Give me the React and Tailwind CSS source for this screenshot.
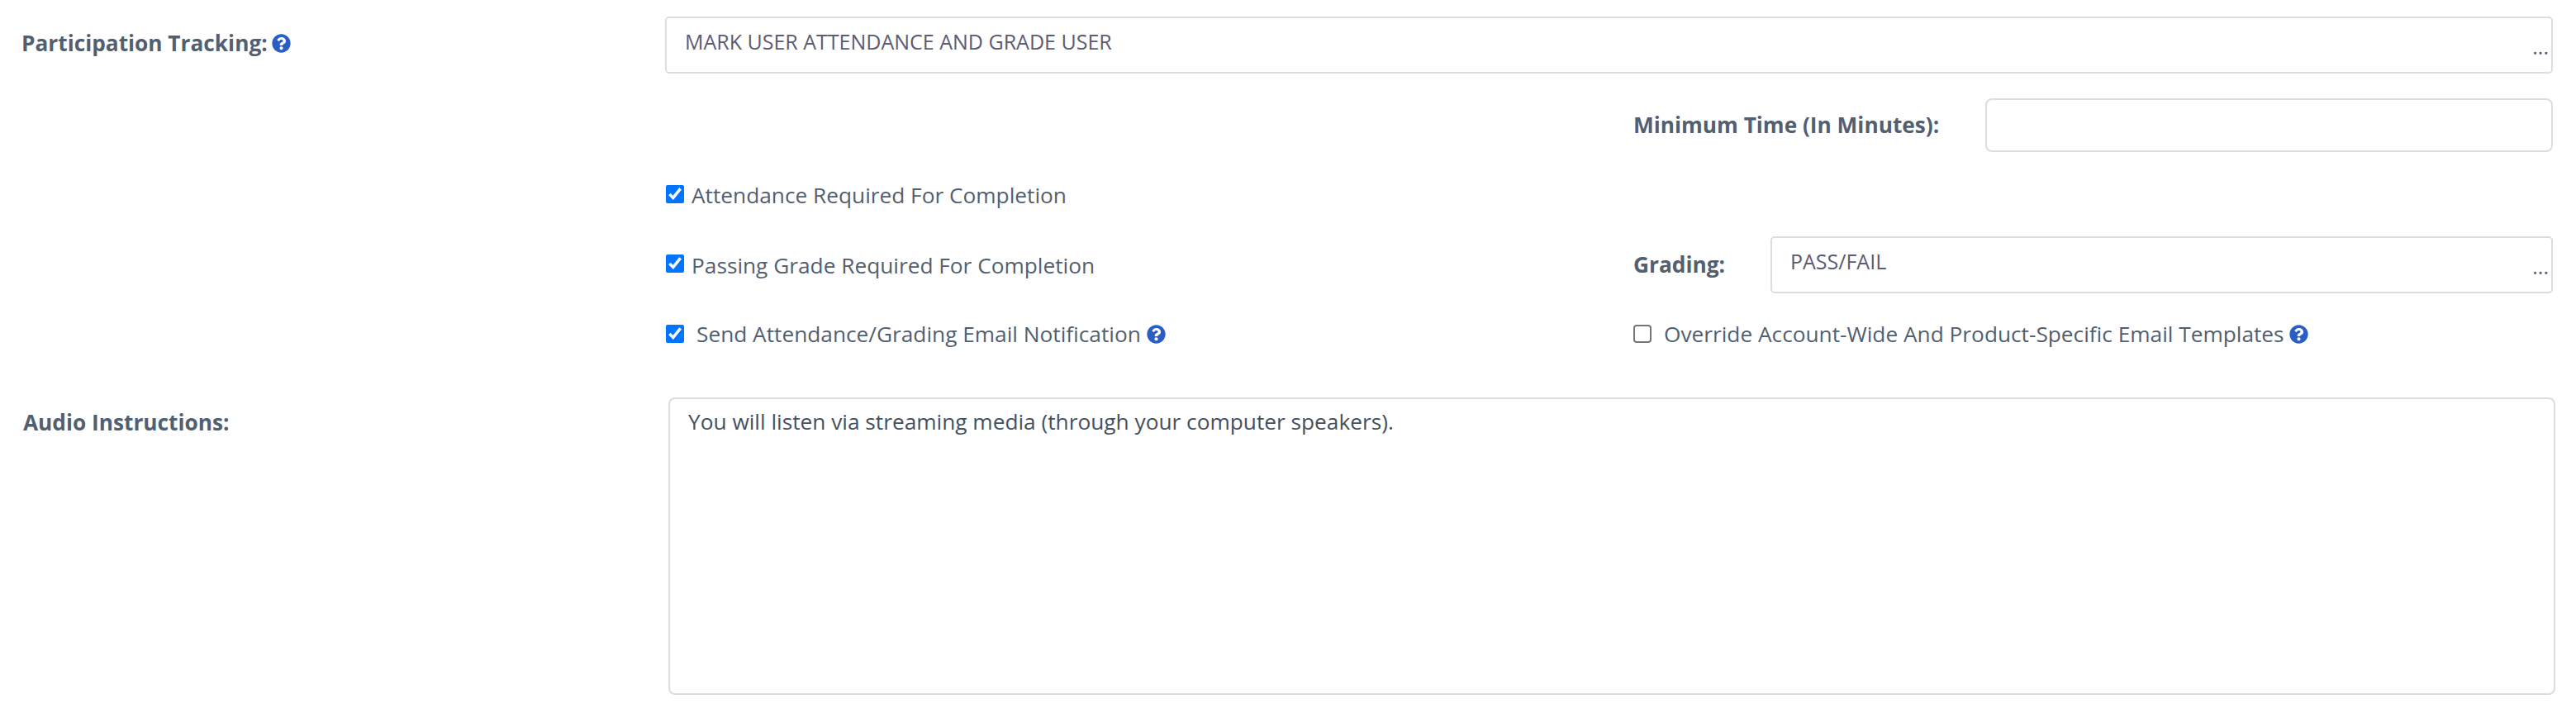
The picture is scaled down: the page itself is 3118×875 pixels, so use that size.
import { FaQuestionCircle } from "react-icons/fa";

function Help() {
  return <FaQuestionCircle className="text-[#2a5ec2] w-[23px] h-[23px] shrink-0" />;
}

function Label({ children, className = "" }) {
  return <span className={`font-bold text-[26.25px] leading-[30px] text-[#525f70] whitespace-nowrap ${className}`}>{children}</span>;
}

function SelectBox({ value, className = "" }) {
  return (
    <div className={`h-[69px] border-2 border-[#dddddd] rounded-[5px] bg-white flex pl-[22px] pr-[3px] text-[25px] text-[#5b5b72] ${className}`}>
      <span className="flex-1 pt-[14px] leading-[28px]">{value}</span>
      <span className="self-end pb-[17px] leading-[28px]">...</span>
    </div>
  );
}

function Check({ checked, label, gap = "ml-[9px]", boxClass = "" }) {
  return (
    <label className="flex items-center text-[26.25px] leading-[30px] text-[#525f70] whitespace-nowrap">
      <input type="checkbox" defaultChecked={checked} className={`w-[22px] h-[22px] m-0 shrink-0 ${boxClass}`} />
      <span className={gap}>{label}</span>
    </label>
  );
}

export default function App() {
  return (
    <div className="w-[3118px] h-[875px] bg-white pt-[20px] font-['Open_Sans',sans-serif] overflow-hidden">
      {/* participation tracking */}
      <div className="flex pr-[28px]">
        <div className="w-[805px] pl-[26px] pt-[17px] flex items-start gap-[5px]">
          <Label>Participation Tracking:</Label>
          <span className="pt-[4px]"><Help /></span>
        </div>
        <SelectBox className="flex-1" value="MARK USER ATTENDANCE AND GRADE USER" />
      </div>

      <div className="flex flex-col ml-[806px] mr-[28px]">
        <div className="flex items-center mt-[30px] h-[65px]">
          <div className="w-[1171px]" />
          <Label className="w-[426px] pb-[2px]">Minimum Time (In Minutes):</Label>
          <div className="flex-1 h-[65px] border-2 border-[#dddddd] rounded-[8px] bg-white" />
        </div>

        <div className="flex items-center h-[30px] mt-[37px]">
          <Check checked label="Attendance Required For Completion" boxClass="mb-[3px]" />
        </div>

        <div className="flex items-center mt-[35px]">
          <div className="w-[1171px]">
            <Check checked label="Passing Grade Required For Completion" boxClass="mb-[4px]" />
          </div>
          <Label className="w-[166px] pb-[2px]">Grading:</Label>
          <SelectBox className="flex-1" value="PASS/FAIL" />
        </div>

        <div className="flex items-center mt-[34px] h-[30px]">
          <div className="w-[1171px] flex items-center gap-[7px]">
            <Check checked gap="ml-[15px]" label="Send Attendance/Grading Email Notification" />
            <Help />
          </div>
          <div className="flex items-center gap-[6px]">
            <Check
              label="Override Account-Wide And Product-Specific Email Templates"
              gap="ml-[15px]"
              boxClass="appearance-none bg-white border-2 border-[#767676] rounded-[4px]"
            />
            <Help />
          </div>
        </div>
      </div>

      {/* audio instructions */}
      <div className="flex pr-[25px] mt-[62px]">
        <div className="w-[809px] pl-[28px] pt-[15px]">
          <Label>Audio Instructions:</Label>
        </div>
        <textarea
          readOnly
          defaultValue="You will listen via streaming media (through your computer speakers)."
          className="flex-1 h-[360px] border-2 border-[#dddddd] rounded-[8px] bg-white px-[22px] py-[12px] text-[26.25px] leading-[30px] text-[#45505f] resize-none outline-none"
        />
      </div>
    </div>
  );
}
